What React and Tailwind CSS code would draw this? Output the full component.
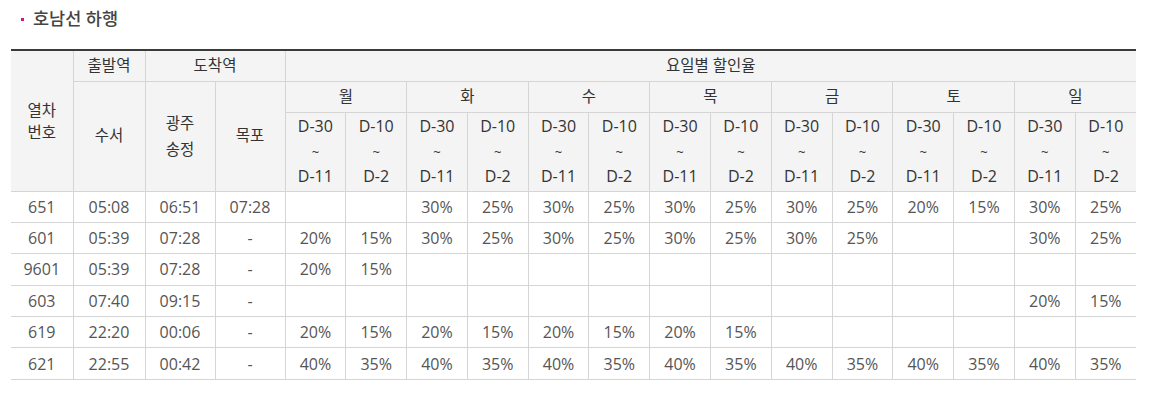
import React from "react";

const days = ["월", "화", "수", "목", "금", "토", "일"];

const rows = [
  ["651", "05:08", "06:51", "07:28", ["", "", "30%", "25%", "30%", "25%", "30%", "25%", "30%", "25%", "20%", "15%", "30%", "25%"]],
  ["601", "05:39", "07:28", "-", ["20%", "15%", "30%", "25%", "30%", "25%", "30%", "25%", "30%", "25%", "", "", "30%", "25%"]],
  ["9601", "05:39", "07:28", "-", ["20%", "15%", "", "", "", "", "", "", "", "", "", "", "", ""]],
  ["603", "07:40", "09:15", "-", ["", "", "", "", "", "", "", "", "", "", "", "", "20%", "15%"]],
  ["619", "22:20", "00:06", "-", ["20%", "15%", "20%", "15%", "20%", "15%", "20%", "15%", "", "", "", "", "", ""]],
  ["621", "22:55", "00:42", "-", ["40%", "35%", "40%", "35%", "40%", "35%", "40%", "35%", "40%", "35%", "40%", "35%", "40%", "35%"]],
];

const font = { fontFamily: '"Open Sans", "Noto Sans CJK KR", sans-serif' };

export default function App() {
  const th = "border-b border-l border-[#d5d5d5] bg-[#f4f4f4] text-[#333] font-normal text-center align-middle p-0";
  const td = "border-b border-l border-[#d5d5d5] text-[#555] text-center align-middle p-0 h-[31.4px] text-[16px]";
  return (
    <div className="bg-white w-[1152px] h-[403px] overflow-hidden" style={font}>
      <div className="flex items-center h-[38px] pl-[21px]">
        <span className="w-[3px] h-[3px] bg-[#d0168a] mr-[9px] mt-[1px]"></span>
        <span className="text-[17.5px] font-medium text-[#444] leading-none">호남선 하행</span>
      </div>
      <div className="pl-[11px] pt-[11px]">
        <table className="table-fixed border-collapse w-[1125px] border-t-2 border-[#3a3a3a]">
          <colgroup>
            <col className="w-[62px]" />
            <col className="w-[72px]" />
            <col className="w-[70px]" />
            <col className="w-[70px]" />
            {Array.from({ length: 14 }).map((_, i) => (
              <col key={i} />
            ))}
          </colgroup>
          <thead>
            <tr className="h-[31px]">
              <th rowSpan={3} className={th.replace("border-l ", "") + " text-[15.5px] leading-[22px]"}>
                열차
                <br />
                번호
              </th>
              <th className={th + " text-[15.5px]"}>출발역</th>
              <th colSpan={2} className={th + " text-[15.5px]"}>도착역</th>
              <th colSpan={14} className={th + " text-[15.5px]"}>요일별 할인율</th>
            </tr>
            <tr className="h-[31px]">
              <th rowSpan={2} className={th + " text-[15.5px]"}>수서</th>
              <th rowSpan={2} className={th + " text-[15.5px] leading-[26px]"}>
                광주
                <br />
                송정
              </th>
              <th rowSpan={2} className={th + " text-[15.5px]"}>목포</th>
              {days.map((d) => (
                <th key={d} colSpan={2} className={th + " text-[15.5px]"}>
                  {d}
                </th>
              ))}
            </tr>
            <tr className="h-[79px]">
              {days.map((d) => (
                <React.Fragment key={d}>
                  <th className={th + " text-[16px] leading-[24.5px]"}>
                    D-30
                    <br />
                    <span className="text-[13px]">~</span>
                    <br />
                    D-11
                  </th>
                  <th className={th + " text-[16px] leading-[24.5px]"}>
                    D-10
                    <br />
                    <span className="text-[13px]">~</span>
                    <br />
                    D-2
                  </th>
                </React.Fragment>
              ))}
            </tr>
          </thead>
          <tbody>
            {rows.map((r) => (
              <tr key={r[0]}>
                <td className={td.replace("border-l ", "")}>{r[0]}</td>
                <td className={td}>{r[1]}</td>
                <td className={td}>{r[2]}</td>
                <td className={td}>{r[3]}</td>
                {r[4].map((v, i) => (
                  <td key={i} className={td}>
                    {v}
                  </td>
                ))}
              </tr>
            ))}
          </tbody>
        </table>
      </div>
    </div>
  );
}
